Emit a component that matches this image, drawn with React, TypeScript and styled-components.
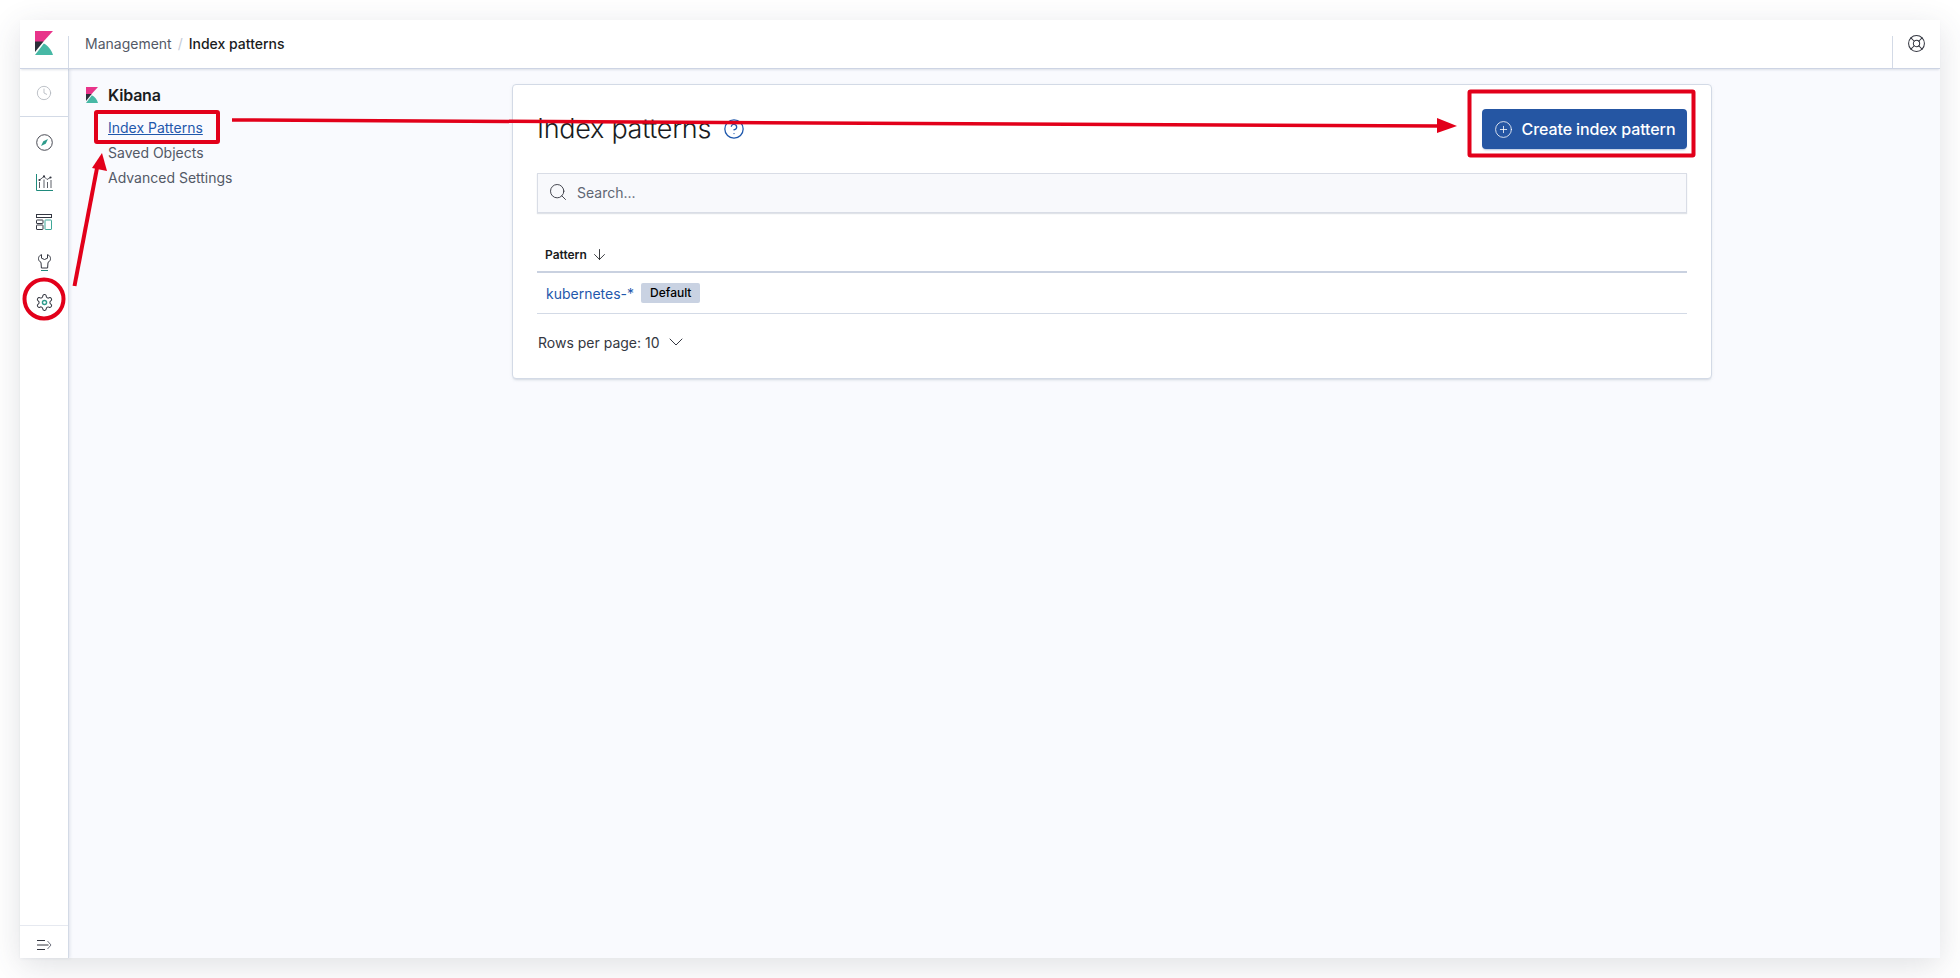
import React from 'react';
import styled, { createGlobalStyle } from 'styled-components';
import { ArrowDown, ChevronDown, CircleHelp, CirclePlus, Clock, LifeBuoy, Search } from 'lucide-react';

const GlobalStyle = createGlobalStyle`
  * { box-sizing: border-box; }
  html, body { margin: 0; background: #fff; }
  body { font-family: Inter, "Noto Sans", sans-serif; color: #1a1c21; }
`;

const Page = styled.div`
  position: relative;
  width: 1960px;
  height: 978px;
  padding: 20px;
  overflow: hidden;
`;

const Frame = styled.div`
  height: 938px;
  display: flex;
  flex-direction: column;
  background: #f9fafe;
  box-shadow: 0 8px 30px rgba(60, 66, 90, 0.16);
`;

const Header = styled.header`
  height: 49px;
  flex: none;
  display: flex;
  align-items: stretch;
  background: #fff;
  border-bottom: 1px solid #cdd4e4;
  box-shadow: 0 2px 2px -1px rgba(152, 162, 179, 0.3);
  position: relative;
  z-index: 2;
`;

const LogoCell = styled.div`
  width: 48px;
  padding: 11px 0 0 15px;
`;

const Divider = styled.div`
  width: 1px;
  margin-top: 16px;
  background: #d3dae6;
`;

const Crumbs = styled.nav`
  flex: 1;
  display: flex;
  align-items: center;
  gap: 6px;
  padding-left: 16px;
  padding-bottom: 1px;
  font-size: 14px;
  line-height: 20px;
`;

const Crumb = styled.span<{ $current?: boolean }>`
  color: ${p => (p.$current ? '#1a1c21' : '#535966')};
  font-weight: ${p => (p.$current ? 500 : 400)};
`;

const Slash = styled.span`
  color: #c5cbd8;
`;

const HelpCell = styled.div`
  width: 47px;
  display: flex;
  align-items: center;
  justify-content: center;
  padding-bottom: 2px;
  color: #343741;
`;

const Body = styled.div`
  flex: 1;
  min-height: 0;
  display: flex;
`;

const Rail = styled.aside`
  width: 49px;
  flex: none;
  display: flex;
  flex-direction: column;
  background: #fff;
  border-right: 1px solid #d3dae6;
  box-shadow: 1px 0 3px rgba(152, 162, 179, 0.25);
`;

const RecentSlot = styled.div`
  height: 48px;
  flex: none;
  display: flex;
  align-items: center;
  justify-content: center;
  color: #b4b8bf;
  border-bottom: 1px solid #d3dae6;
`;

const RailList = styled.div`
  flex: 1;
  padding-top: 5px;
`;

const RailItem = styled.div`
  height: 40px;
  display: flex;
  align-items: center;
  justify-content: center;
`;

const RailFoot = styled.div`
  height: 33px;
  flex: none;
  display: flex;
  align-items: center;
  justify-content: center;
  padding-top: 6px;
  border-top: 1px solid #e6e9f0;
`;

const Main = styled.main`
  flex: 1;
  display: flex;
  align-items: flex-start;
`;

const SideNav = styled.div`
  width: 443px;
  flex: none;
  padding: 16px 0 0 17px;
`;

const SideTitle = styled.div`
  display: flex;
  align-items: center;
  gap: 10px;
  height: 20px;
  font-size: 16px;
  font-weight: 600;
  letter-spacing: -0.2px;
  color: #1a1c21;
`;

const SideLinks = styled.div`
  display: flex;
  flex-direction: column;
  padding: 10px 0 0 22px;
`;

const SideLink = styled.a<{ $active?: boolean }>`
  height: 25px;
  line-height: 25px;
  font-size: 14px;
  color: ${p => (p.$active ? '#1f58ac' : '#535966')};
  text-decoration: ${p => (p.$active ? 'underline' : 'none')};
`;

const Panel = styled.section`
  width: 1200px;
  height: 295px;
  margin-top: 15px;
  padding: 24px;
  background: #fff;
  border: 1px solid #d3dae6;
  border-radius: 4px;
  box-shadow: 0 2px 2px -1px rgba(152, 162, 179, 0.3), 0 1px 5px -2px rgba(152, 162, 179, 0.3);
`;

const PanelHead = styled.div`
  height: 40px;
  display: flex;
  align-items: center;
  justify-content: space-between;
`;

const TitleRow = styled.div`
  display: flex;
  align-items: center;
  gap: 12px;
`;

const Title = styled.h1`
  margin: 0;
  font-size: 27px;
  line-height: 40px;
  font-weight: 300;
  letter-spacing: -0.3px;
  color: #1a1c21;
`;

const HelpMark = styled.span`
  display: flex;
  color: #1f58ac;
`;

const CreateButton = styled.button`
  width: 205px;
  height: 40px;
  display: flex;
  align-items: center;
  justify-content: center;
  gap: 9px;
  border: 0;
  border-radius: 4px;
  background: #2556a3;
  color: #fff;
  font: 500 16px Inter, sans-serif;
  letter-spacing: -0.1px;
  box-shadow: 0 2px 2px -1px rgba(37, 86, 163, 0.35);
`;

const SearchField = styled.div`
  height: 40px;
  margin-top: 24px;
  display: flex;
  align-items: center;
  gap: 9px;
  padding: 0 0 2px 10px;
  background: #f8f9fc;
  border: 1px solid #d9dde6;
  box-shadow: 0 1px 1px rgba(152, 162, 179, 0.3);
  font-size: 14px;
  color: #5f6673;
`;

const HeadRow = styled.div`
  height: 40px;
  margin-top: 20px;
  display: flex;
  align-items: center;
  gap: 4px;
  padding-left: 8px;
  padding-top: 4px;
  font-size: 12px;
  font-weight: 600;
  color: #1a1c21;
  border-bottom: 2px solid #c9d1e0;
`;

const PatternRow = styled.div`
  height: 41px;
  display: flex;
  align-items: center;
  gap: 7px;
  padding-left: 9px;
  border-bottom: 1px solid #d3dae6;
`;

const PatternLink = styled.a`
  font-size: 14px;
  color: #1f58ac;
`;

const Badge = styled.span`
  height: 20px;
  padding: 0 9px;
  line-height: 20px;
  border-radius: 2px;
  background: #c9d2e2;
  font-size: 12px;
  font-weight: 500;
  color: #000;
`;

const PageSize = styled.div`
  margin-top: 13px;
  height: 30px;
  display: flex;
  align-items: center;
  gap: 4px;
  padding-left: 1px;
  font-size: 14px;
  color: #343741;
`;

const Annotations = styled.svg`
  position: absolute;
  inset: 0;
  pointer-events: none;
`;

const KibanaLogo = ({ w, h }: { w: number; h: number }) => (
  <svg width={w} height={h} viewBox="0 0 18 24">
    <path d="M0 0h18L8 11H0z" fill="#e8348a" />
    <path d="M0 10.5h8.5L0 21z" fill="#2b2d38" />
    <path d="M0 24 8.8 12.5C13 14.5 16.6 19 18 24z" fill="#47b8a5" />
  </svg>
);

const CompassIcon = () => (
  <svg width="17" height="17" viewBox="0 0 17 17" fill="none">
    <circle cx="8.5" cy="8.5" r="7.8" stroke="#343741" strokeWidth=".9" />
    <path d="M12 5 9.7 9.7 5 12 7.3 7.3z" fill="#2e9c8c" />
  </svg>
);

const ChartIcon = () => (
  <svg width="17" height="17" viewBox="0 0 17 17" fill="none">
    <path d="M.5 0v16.5H17" stroke="#1f8a7c" />
    <path d="M3.5 14V8M8 14V5.5M11.5 14V8M15 14V6" stroke="#343741" strokeWidth=".8" />
    <path d="M3.5 6 8 2.5 11 5.5 14.5 3.5" stroke="#343741" strokeWidth=".8" />
    <circle cx="3.5" cy="6" r="1.1" fill="#343741" />
    <circle cx="8" cy="2.4" r="1.1" fill="#343741" />
    <circle cx="14.5" cy="3.5" r="1.1" fill="#343741" />
  </svg>
);

const DashboardIcon = () => (
  <svg width="16" height="16" viewBox="0 0 16 16" fill="none">
    <rect x=".5" y=".5" width="15" height="3" stroke="#343741" />
    <rect x=".5" y="6" width="6.5" height="3.5" rx=".5" stroke="#343741" />
    <rect x=".5" y="11" width="6.5" height="4.5" rx=".5" stroke="#343741" />
    <rect x="9" y="6" width="6.5" height="9.5" rx=".5" stroke="#3ea898" />
  </svg>
);

const WrenchIcon = () => (
  <svg width="13" height="17" viewBox="0 0 13 17" fill="none">
    <path
      d="M3.5.6C1.6 1.3.5 2.9.5 4.6c0 1.8 1 3 2.5 3.8L3.4 14h6.2L10 8.4c1.5-.8 2.5-2 2.5-3.8 0-1.7-1.1-3.3-3-4v3.6L6.5 5.5l-3-1.3z"
      stroke="#343741"
    />
    <path d="M3 16.5h7" stroke="#1f8a7c" />
  </svg>
);

const GearIcon = () => (
  <svg width="19" height="19" viewBox="0 0 24 24" fill="none">
    <path
      d="M12.22 2h-.44a2 2 0 0 0-2 2v.18a2 2 0 0 1-1 1.73l-.43.25a2 2 0 0 1-2 0l-.15-.08a2 2 0 0 0-2.73.73l-.22.38a2 2 0 0 0 .73 2.73l.15.1a2 2 0 0 1 1 1.72v.51a2 2 0 0 1-1 1.74l-.15.09a2 2 0 0 0-.73 2.73l.22.38a2 2 0 0 0 2.73.73l.15-.08a2 2 0 0 1 2 0l.43.25a2 2 0 0 1 1 1.73V20a2 2 0 0 0 2 2h.44a2 2 0 0 0 2-2v-.18a2 2 0 0 1 1-1.73l.43-.25a2 2 0 0 1 2 0l.15.08a2 2 0 0 0 2.73-.73l.22-.39a2 2 0 0 0-.73-2.73l-.15-.08a2 2 0 0 1-1-1.74v-.5a2 2 0 0 1 1-1.74l.15-.09a2 2 0 0 0 .73-2.73l-.22-.38a2 2 0 0 0-2.73-.73l-.15.08a2 2 0 0 1-2 0l-.43-.25a2 2 0 0 1-1-1.73V4a2 2 0 0 0-2-2z"
      stroke="#343741"
      strokeWidth="1.3"
    />
    <circle cx="12" cy="12" r="2.6" stroke="#2e9c8c" strokeWidth="1.8" />
  </svg>
);

const CollapseIcon = () => (
  <svg width="15" height="10" viewBox="0 0 15 10" fill="none">
    <path d="M0 .5h8M0 5h11.5M0 9.5h8" stroke="#343741" />
    <path d="m10.5 1 3.5 4-3.5 4" stroke="#6f7480" />
  </svg>
);

const railIcons = [CompassIcon, ChartIcon, DashboardIcon, WrenchIcon, GearIcon];

export default function App() {
  return (
    <Page>
      <GlobalStyle />
      <Frame>
        <Header>
          <LogoCell>
            <KibanaLogo w={18} h={24} />
          </LogoCell>
          <Divider />
          <Crumbs>
            <Crumb>Management</Crumb>
            <Slash>/</Slash>
            <Crumb $current>Index patterns</Crumb>
          </Crumbs>
          <Divider />
          <HelpCell>
            <LifeBuoy size={19} strokeWidth={1.3} />
          </HelpCell>
        </Header>
        <Body>
          <Rail>
            <RecentSlot>
              <Clock size={16} strokeWidth={1.3} />
            </RecentSlot>
            <RailList>
              {railIcons.map((Icon, i) => (
                <RailItem key={i}>
                  <Icon />
                </RailItem>
              ))}
            </RailList>
            <RailFoot>
              <CollapseIcon />
            </RailFoot>
          </Rail>
          <Main>
            <SideNav>
              <SideTitle>
                <KibanaLogo w={12} h={16} />
                Kibana
              </SideTitle>
              <SideLinks>
                <SideLink $active>Index Patterns</SideLink>
                <SideLink>Saved Objects</SideLink>
                <SideLink>Advanced Settings</SideLink>
              </SideLinks>
            </SideNav>
            <Panel>
              <PanelHead>
                <TitleRow>
                  <Title>Index patterns</Title>
                  <HelpMark>
                    <CircleHelp size={22} strokeWidth={1.4} />
                  </HelpMark>
                </TitleRow>
                <CreateButton>
                  <CirclePlus size={19} strokeWidth={1} />
                  Create index pattern
                </CreateButton>
              </PanelHead>
              <SearchField>
                <Search size={20} strokeWidth={1.1} color="#343741" />
                Search...
              </SearchField>
              <HeadRow>
                Pattern
                <ArrowDown size={17} strokeWidth={1.2} />
              </HeadRow>
              <PatternRow>
                <PatternLink>kubernetes-*</PatternLink>
                <Badge>Default</Badge>
              </PatternRow>
              <PageSize>
                Rows per page: 10
                <ChevronDown size={24} strokeWidth={1} />
              </PageSize>
            </Panel>
          </Main>
        </Body>
      </Frame>
      <Annotations width="1960" height="978" viewBox="0 0 1960 978" fill="none">
        <circle cx="44" cy="299" r="19.5" stroke="#e2001a" strokeWidth="4" />
        <rect x="96" y="112" width="122" height="30" rx="1" stroke="#e2001a" strokeWidth="4" />
        <rect x="1469.5" y="91.5" width="224" height="64" rx="1" stroke="#e2001a" strokeWidth="4" />
        <path d="M232 120 1440 126" stroke="#e2001a" strokeWidth="3.5" />
        <path d="M1437 118 1457 126 1437 133z" fill="#e2001a" />
        <path d="M74.5 286 97 168" stroke="#e2001a" strokeWidth="4" />
        <path d="M102 153 107 171 92 168z" fill="#e2001a" />
      </Annotations>
    </Page>
  );
}
